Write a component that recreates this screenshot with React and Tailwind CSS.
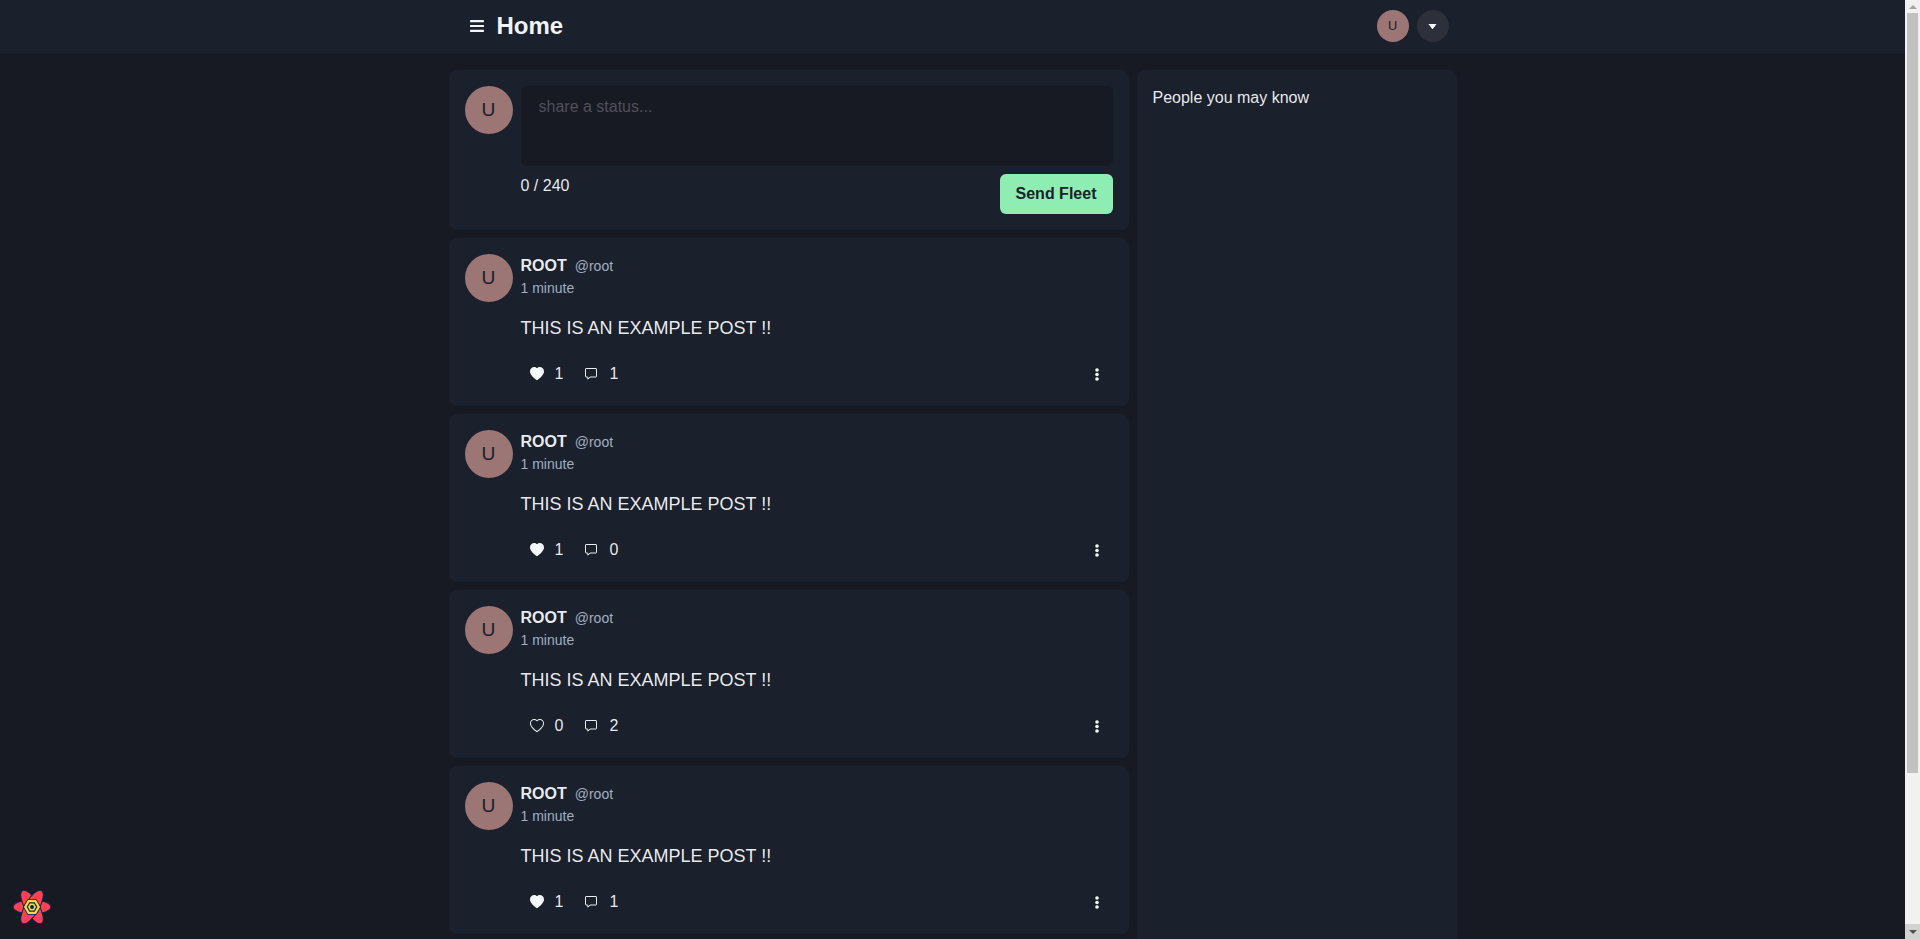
import { BsHeart, BsHeartFill } from "react-icons/bs";

const POSTS = [
  { likes: 1, liked: true, comments: 1 },
  { likes: 1, liked: true, comments: 0 },
  { likes: 0, liked: false, comments: 2 },
  { likes: 1, liked: true, comments: 1 },
];

function Avatar() {
  return (
    <div className="w-12 h-12 shrink-0 rounded-full bg-[#9c7675] flex items-center justify-center text-[19.2px] text-[#1a202c]">
      U
    </div>
  );
}

function Composer() {
  return (
    <div className="bg-[#1a202c] rounded-lg p-4 flex gap-2">
      <Avatar />
      <div className="flex-1 min-w-0">
        <textarea
          placeholder="share a status..."
          className="block w-full h-20 resize-none rounded-md bg-[#171923] px-[18px] py-[9px] text-base text-white/90 outline-none placeholder:text-white/25"
        />
        <div className="mt-2 flex items-start justify-between">
          <span className="text-base leading-5 mt-[2px] text-white/[.92]">0 / 240</span>
          <button className="h-10 w-[113px] rounded-md bg-[#8dedb3] text-base font-bold text-[#1a202c]">Send Fleet</button>
        </div>
      </div>
    </div>
  );
}

function ChatIcon() {
  return (
    <svg viewBox="0 0 12 12" className="ml-[21px] w-3 h-3" fill="none" stroke="#e8eaed" strokeWidth="1">
      <path d="M1 .5h10a.5.5 0 0 1 .5.5v7.5a.5.5 0 0 1-.5.5H5L2.8 11.2V9H1a.5.5 0 0 1-.5-.5V1A.5.5 0 0 1 1 .5z" />
    </svg>
  );
}

function DotsIcon() {
  return (
    <svg viewBox="0 0 4 13" className="ml-auto mr-[14px] w-1 h-[13px]" fill="#f7fafc">
      <circle cx="2" cy="2" r="1.8" />
      <circle cx="2" cy="6.5" r="1.8" />
      <circle cx="2" cy="11" r="1.8" />
    </svg>
  );
}

function Post({ post }) {
  const Heart = post.liked ? BsHeartFill : BsHeart;
  return (
    <div className="bg-[#1a202c] rounded-lg p-4 flex gap-2">
      <Avatar />
      <div className="flex-1 min-w-0">
        <div className="flex items-baseline h-6">
          <span className="text-base font-bold text-white/[.92]">ROOT</span>
          <span className="ml-2 text-sm text-[#a0aec0]">@root</span>
        </div>
        <div className="text-sm leading-5 text-[#a0aec0]">1 minute</div>
        <p className="mt-4 text-lg leading-7 text-white/[.92]">THIS IS AN EXAMPLE POST !!</p>
        <div className="mt-4 h-8 flex items-center text-base text-white/[.92]">
          <Heart className="ml-[9px] w-[14px] h-[14px] text-[#f7fafc]" />
          <span className="ml-[11px] w-[9px]">{post.likes}</span>
          <ChatIcon />
          <span className="ml-[13px]">{post.comments}</span>
          <DotsIcon />
        </div>
      </div>
    </div>
  );
}

function QueryLogo() {
  return (
    <button className="fixed left-3 bottom-3 w-10 h-10">
      <svg viewBox="0 0 40 40" className="w-full h-full">
        {[0, 60, 120].map((angle) => (
          <ellipse key={angle} cx="20" cy="20" rx="19" ry="7" fill="#ff4154" stroke="#002c4b" strokeWidth="1" transform={`rotate(${angle} 20 20)`} />
        ))}
        <polygon points="29,20 24.5,12.2 15.5,12.2 11,20 15.5,27.8 24.5,27.8" fill="#002c4b" />
        <polygon points="28,20 24,13.1 16,13.1 12,20 16,26.9 24,26.9" fill="#ffd94c" />
        <polygon points="25.4,20 22.7,15.3 17.3,15.3 14.6,20 17.3,24.7 22.7,24.7" fill="#002c4b" />
        <polygon points="24,20 22,16.5 18,16.5 16,20 18,23.5 22,23.5" fill="#ffd94c" />
        <circle cx="20" cy="20" r="2" fill="#002c4b" />
      </svg>
    </button>
  );
}

// the browser scrollbar, drawn because the headless shot hides the native one
function Scrollbar() {
  return (
    <div className="w-[15px] shrink-0 h-full bg-[#f1f1f1] flex flex-col">
      <div className="h-[13px] shrink-0 flex items-center justify-center">
        <div className="w-0 h-0 border-x-[4px] border-x-transparent border-b-[4px] border-b-[#a3a3a3]" />
      </div>
      <div className="mx-[2px] h-[760px] bg-[#c1c1c1]" />
      <div className="flex-1" />
      <div className="h-[15px] shrink-0 bg-[#d2d2d2] flex items-center justify-center">
        <div className="w-0 h-0 border-x-[4px] border-x-transparent border-t-[4px] border-t-[#505050]" />
      </div>
    </div>
  );
}

export default function App() {
  return (
    <div className="h-screen overflow-hidden flex bg-[#171923] font-['Liberation_Sans',Arial,sans-serif] text-white/[.92]">
      <div className="flex-1 min-w-0 h-full overflow-hidden">
        <header className="h-[54px] pb-[2px] bg-[#1a202c]">
          <div className="mx-auto w-[1008px] h-full pl-[21px] pr-2 flex items-center">
            <svg viewBox="0 0 14 12" className="w-[14px] h-3 text-[#f1f3f6]" fill="currentColor">
              <rect x="0" y="0" width="14" height="2.2" rx="0.4" />
              <rect x="0" y="4.9" width="14" height="2.2" rx="0.4" />
              <rect x="0" y="9.8" width="14" height="2.2" rx="0.4" />
            </svg>
            <h1 className="ml-[13px] text-2xl font-bold text-[#f1f3f6]">Home</h1>
            <div className="ml-auto flex gap-2">
              <div className="w-8 h-8 rounded-full bg-[#9c7675] flex items-center justify-center text-[12.8px] text-[#1a202c]">U</div>
              <button className="w-8 h-8 rounded-full bg-[#2d303a] flex items-center justify-center">
                <svg viewBox="0 0 10 6" className="w-[9px] h-[5px]" fill="#f7fafc">
                  <path d="M0 0h10L5.5 5.7a.6.6 0 0 1-1 0z" />
                </svg>
              </button>
            </div>
          </div>
        </header>
        <main className="mx-auto w-[1008px] flex gap-2 pt-4">
          <div className="w-[680px] flex flex-col gap-2">
            <Composer />
            {POSTS.map((post, i) => (
              <Post key={i} post={post} />
            ))}
          </div>
          <aside className="w-[320px] h-[1040px] bg-[#1a202c] rounded-lg p-4">
            <h2 className="text-base">People you may know</h2>
          </aside>
        </main>
      </div>
      <Scrollbar />
      <QueryLogo />
    </div>
  );
}
